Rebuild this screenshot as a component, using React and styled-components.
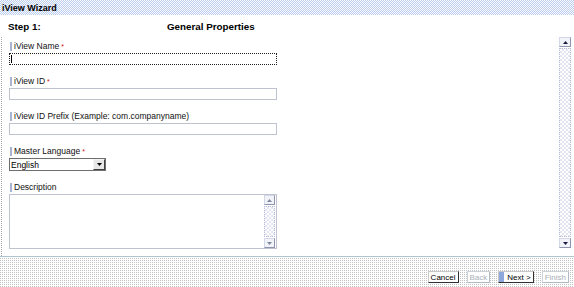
import React from "react";
import styled, { createGlobalStyle } from "styled-components";

const Global = createGlobalStyle`
  html, body { margin: 0; padding: 0; background: #fff; }
  body { font-family: "Liberation Sans", Arial, sans-serif; color: #000; }
  #root { width: 574px; height: 287px; overflow: hidden; }
`;

const Page = styled.div`
  width: 574px;
  height: 287px;
  display: flex;
  flex-direction: column;
  background: #fff;
`;

const TitleBar = styled.div`
  flex: none;
  height: 15px;
  padding-left: 2px;
  display: flex;
  align-items: center;
  font-size: 9px;
  font-weight: bold;
  background: repeating-conic-gradient(#bccdee 0 25%, #fbfcff 0 50%) 0 0 / 2px 2px;
`;

const StepHeader = styled.div`
  flex: none;
  height: 22px;
  display: flex;
  align-items: center;
  padding-left: 8px;
  font-size: 9.8px;
  font-weight: bold;
`;

const StepNo = styled.div`
  width: 159px;
`;

const Main = styled.div`
  flex: 1;
  display: flex;
  flex-direction: column;
  margin-left: 1px;
  border-left: 1px dotted #a8a8a8;
`;

const Panel = styled.div`
  flex: none;
  height: 211px;
  display: flex;
`;

const Form = styled.div`
  flex: 1;
  display: flex;
  flex-direction: column;
  gap: 10px;
  padding: 3px 0 0 7px;
`;

const Field = styled.div`
  display: flex;
  flex-direction: column;
  align-items: flex-start;
`;

const Label = styled.div`
  height: 12px;
  margin-bottom: 1px;
  display: flex;
  align-items: center;
  font-size: 8.5px;
  color: #111;
  white-space: nowrap;
`;

const LabelBar = styled.span`
  width: 2px;
  height: 9px;
  margin: 0 2px 0 1px;
  background: #a9b3d2;
`;

const Req = styled.span`
  color: #d01010;
  margin-left: 2px;
  font-size: 7px;
`;

const TextBox = styled.div`
  box-sizing: border-box;
  width: 268px;
  height: 12px;
  display: flex;
  align-items: center;
  padding-left: 1px;
  background: #fff;
  border: 1px ${(p) => (p.$focused ? "dotted #202020" : "solid #bfc3cf")};
`;

const Caret = styled.span`
  width: 1px;
  height: 8px;
  background: #000;
`;

const Select = styled.div`
  box-sizing: border-box;
  width: 97px;
  height: 13px;
  display: flex;
  align-items: stretch;
  border: 1px solid #6e6e6e;
  background: #fff;
  font-size: 8.5px;
`;

const SelectText = styled.div`
  flex: 1;
  display: flex;
  align-items: center;
  padding-left: 1px;
`;

const SelectBtn = styled.div`
  box-sizing: border-box;
  width: 12px;
  display: flex;
  align-items: center;
  justify-content: center;
  background: #e6e6e6;
  border: 1px solid;
  border-color: #f4f4f4 #404040 #404040 #f4f4f4;
`;

const TextArea = styled.div`
  box-sizing: border-box;
  width: 268px;
  height: 55px;
  display: flex;
  justify-content: flex-end;
  border: 1px solid #bfc3cf;
  background: #fff;
`;

const ScrollBar = styled.div`
  flex: none;
  width: ${(p) => p.$w}px;
  margin-right: ${(p) => p.$mr}px;
  display: flex;
  flex-direction: column;
  gap: 1px;
`;

const ScrollBtn = styled.div`
  box-sizing: border-box;
  height: 10px;
  display: flex;
  align-items: center;
  justify-content: center;
  background: #f2f3f8;
  border: 1px solid;
  border-color: #d4d8e6 #8e94ae #8e94ae #d4d8e6;
`;

const Track = styled.div`
  flex: 1;
  box-sizing: border-box;
  border: 1px dotted #b8bed8;
  background: repeating-conic-gradient(#e2e5f0 0 25%, #fff 0 50%) 0 0 / 4px 4px;
`;

const Footer = styled.div`
  flex: none;
  height: 31px;
  border-top: 1px dotted #9cc6d6;
  display: flex;
  justify-content: flex-end;
  align-items: flex-start;
  gap: 8px;
  padding: 14px 5px 0 0;
  box-sizing: border-box;
  background:
    linear-gradient(#fff 1px, transparent 1px) 0 0 / 2px 2px,
    linear-gradient(90deg, #c2c2c2 1px, #fff 1px) 0 0 / 2px 2px;
`;

const Button = styled.div`
  box-sizing: border-box;
  height: 12px;
  display: flex;
  align-items: center;
  padding: 0 2px;
  font-size: 8px;
  background: #fff;
  color: ${(p) => (p.$disabled ? "#a9b0b8" : "#000")};
  border: 1px solid;
  border-color: ${(p) =>
    p.$disabled ? "#cdd3dc #b3bac6 #b3bac6 #cdd3dc" : "#c8c8c8 #303030 #303030 #c8c8c8"};
`;

const NextMark = styled.span`
  width: 5px;
  align-self: stretch;
  margin: 0 3px 0 -2px;
  background: #8ea8dc;
`;

const Tri = ({ down, color = "#1a1a40" }) => (
  <svg width="5" height="3" viewBox="0 0 5 3">
    <polygon points={down ? "0,0 5,0 2.5,3" : "0,3 5,3 2.5,0"} fill={color} />
  </svg>
);

export default function App() {
  return (
    <>
      <Global />
      <Page>
        <TitleBar>iView Wizard</TitleBar>
        <StepHeader>
          <StepNo>Step 1:</StepNo>
          <div>General Properties</div>
        </StepHeader>
        <Main>
          <Panel>
            <Form>
              <Field>
                <Label>
                  <LabelBar />
                  iView Name<Req>*</Req>
                </Label>
                <TextBox $focused>
                  <Caret />
                </TextBox>
              </Field>
              <Field>
                <Label>
                  <LabelBar />
                  iView ID<Req>*</Req>
                </Label>
                <TextBox />
              </Field>
              <Field>
                <Label>
                  <LabelBar />
                  iView ID Prefix (Example: com.companyname)
                </Label>
                <TextBox />
              </Field>
              <Field>
                <Label>
                  <LabelBar />
                  Master Language<Req>*</Req>
                </Label>
                <Select>
                  <SelectText>English</SelectText>
                  <SelectBtn>
                    <Tri down color="#000" />
                  </SelectBtn>
                </Select>
              </Field>
              <Field>
                <Label>
                  <LabelBar />
                  Description
                </Label>
                <TextArea>
                  <ScrollBar $w={11} $mr={1}>
                    <ScrollBtn>
                      <Tri color="#8088a0" />
                    </ScrollBtn>
                    <Track />
                    <ScrollBtn>
                      <Tri down color="#8088a0" />
                    </ScrollBtn>
                  </ScrollBar>
                </TextArea>
              </Field>
            </Form>
            <ScrollBar $w={12} $mr={3}>
              <ScrollBtn>
                <Tri />
              </ScrollBtn>
              <Track />
              <ScrollBtn>
                <Tri down />
              </ScrollBtn>
            </ScrollBar>
          </Panel>
        </Main>
        <Footer>
          <Button>Cancel</Button>
          <Button $disabled>Back</Button>
          <Button>
            <NextMark />
            Next &gt;
          </Button>
          <Button $disabled>Finish</Button>
        </Footer>
      </Page>
    </>
  );
}
